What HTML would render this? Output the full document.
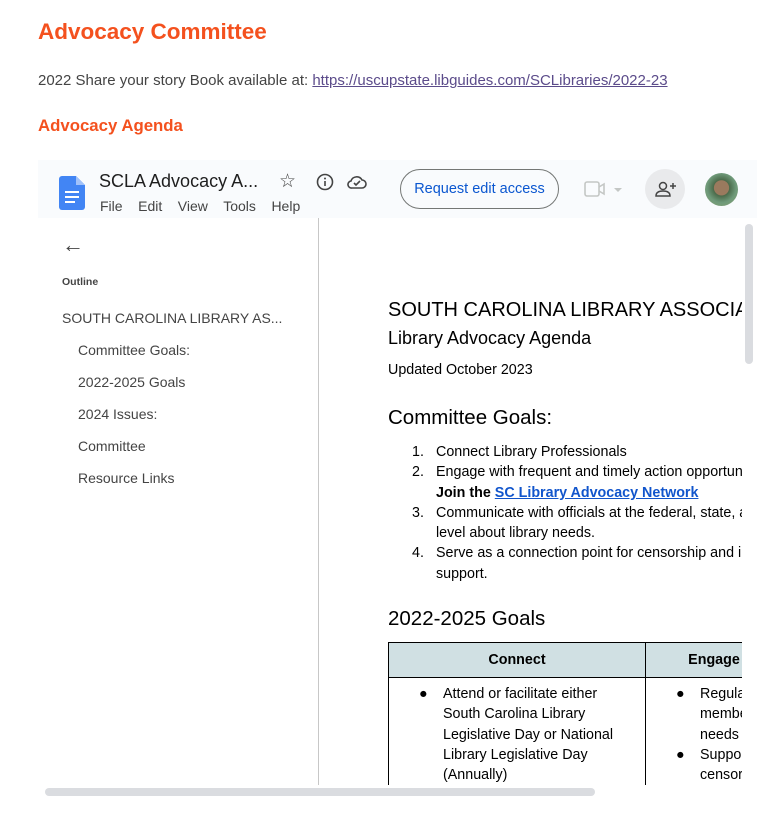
<!DOCTYPE html>
<html><head><style>
body{margin:0;width:777px;height:823px;background:#fff;font-family:"Liberation Sans",sans-serif;position:relative;overflow:hidden}
.a{position:absolute;white-space:nowrap}
h1{position:absolute;left:38px;top:19px;margin:0;font-size:22.5px;color:#f4511e;font-weight:bold}
.st{left:38px;top:72px;font-size:15px;color:#444}
.st a{color:#5b4b8a}
h2{position:absolute;left:38px;top:116px;margin:0;font-size:16.8px;color:#f4511e;font-weight:bold}
.frame{position:absolute;left:38px;top:160px;width:719px;height:625px;overflow:hidden;background:#fff}
.tb{position:absolute;left:0;top:0;width:719px;height:58px;background:#f9fbfd}
.side{position:absolute;left:0;top:58px;width:280px;height:567px;background:#fff;border-right:1px solid #c7c7c7}
.s{font-size:14px;color:#444}
.doc{position:absolute;left:281px;top:58px;width:423px;height:567px;overflow:hidden}
.d{font-family:"Liberation Sans",Arial,sans-serif;color:#000}
table{position:absolute;left:69px;top:424px;border-collapse:collapse;font-size:14.3px;table-layout:fixed;width:390px}
td,th{border:1px solid #000;vertical-align:top;overflow:hidden}
th{background:#d0e0e3;height:32px;font-weight:bold;vertical-align:middle}
</style></head><body>
<h1>Advocacy Committee</h1>
<div class="a st">2022 Share your story Book available at: <a href="#">https://uscupstate.libguides.com/SCLibraries/2022-23</a></div>
<h2>Advocacy Agenda</h2>
<div class="frame">
 <div class="tb">
  <svg class="a" style="left:21px;top:16px" width="26" height="34" viewBox="0 0 26 34"><path d="M0 3a3 3 0 0 1 3-3h14l9 9v22a3 3 0 0 1-3 3H3a3 3 0 0 1-3-3z" fill="#4285f4"/><path d="M17 0v9h9z" fill="#a1c2fa"/><rect x="6" y="15" width="14" height="2" fill="#fff"/><rect x="6" y="20" width="14" height="2" fill="#fff"/><rect x="6" y="25" width="10" height="2" fill="#fff"/></svg>
  <div class="a" style="left:61px;top:11px;font-size:18px;color:#1f1f1f">SCLA Advocacy A...</div>
  <div class="a" style="left:62px;top:38px;font-size:14px;color:#444">File&nbsp;&nbsp;&nbsp; Edit&nbsp;&nbsp;&nbsp; View&nbsp;&nbsp;&nbsp; Tools&nbsp;&nbsp;&nbsp; Help</div>
  <div class="a" style="left:241px;top:10px;font-size:19px;color:#444">☆</div>
  <svg class="a" style="left:278px;top:13px" width="18" height="18"><circle cx="9" cy="9" r="7.5" fill="none" stroke="#444" stroke-width="1.6"/><rect x="8.2" y="8" width="1.6" height="5" fill="#444"/><circle cx="9" cy="5.5" r="1" fill="#444"/></svg>
  <svg class="a" style="left:309px;top:14px" width="20" height="16"><path d="M5 14h10a4 4 0 0 0 0-8 6 6 0 0 0-11 1 3.5 3.5 0 0 0 1 7z" fill="none" stroke="#444" stroke-width="1.6"/><path d="M7 9l2 2 4-4" fill="none" stroke="#444" stroke-width="1.6"/></svg>
  <div class="a" style="left:362px;top:9px;width:159px;height:40px;border:1px solid #747775;border-radius:20px;box-sizing:border-box;text-align:center;line-height:38px;font-size:14.5px;color:#0b57d0">Request edit access</div>
  <svg class="a" style="left:546px;top:20px" width="40" height="18"><rect x="1" y="2" width="14" height="14" rx="2" fill="none" stroke="#c4c7c5" stroke-width="1.6"/><path d="M15 7l5-3v10l-5-3" fill="none" stroke="#c4c7c5" stroke-width="1.6"/><path d="M30 8h8l-4 4z" fill="#c4c7c5"/></svg>
  <div class="a" style="left:607px;top:9px;width:40px;height:40px;border-radius:50%;background:#e9eaec"></div>
  <svg class="a" style="left:617px;top:20px" width="22" height="18"><circle cx="8" cy="6" r="3.5" fill="none" stroke="#444" stroke-width="1.5"/><path d="M1 16c0-4 3-5 7-5s7 1 7 5z" fill="none" stroke="#444" stroke-width="1.5"/><path d="M18 3v6M15 6h6" stroke="#444" stroke-width="1.5"/></svg>
  <div class="a" style="left:667px;top:13px;width:33px;height:33px;border-radius:50%;background:radial-gradient(circle at 50% 45%,#9a7a5e 0 30%,#4a6a4a 32%,#6f9a7a 60%,#8aa070)"></div>
 </div>
 <div class="side">
  <div class="a" style="left:24px;top:14px;font-size:22px;color:#444">←</div>
  <div class="a" style="left:24px;top:58px;font-size:10.5px;color:#444;font-weight:bold">Outline</div>
  <div class="a s" style="left:24px;top:92px">SOUTH CAROLINA LIBRARY AS...</div>
  <div class="a s" style="left:40px;top:124px">Committee Goals:</div>
  <div class="a s" style="left:40px;top:156px">2022-2025 Goals</div>
  <div class="a s" style="left:40px;top:188px">2024 Issues:</div>
  <div class="a s" style="left:40px;top:220px">Committee</div>
  <div class="a s" style="left:40px;top:252px">Resource Links</div>
 </div>
 <div class="doc">
 <div class="a d" style="left:69px;top:81px;font-size:20px">SOUTH CAROLINA LIBRARY ASSOCIATION</div>
 <div class="a d" style="left:69px;top:110px;font-size:18px">Library Advocacy Agenda</div>
 <div class="a d" style="left:69px;top:144px;font-size:14.3px">Updated October 2023</div>
 <div class="a d" style="left:69px;top:188px;font-size:20.5px">Committee Goals:</div>
 <div class="a d" style="left:69px;top:224px;font-size:14.3px;line-height:20.3px">
  <div><span style="display:inline-block;width:48px;padding-left:24px;box-sizing:border-box">1.</span>Connect Library Professionals</div>
  <div><span style="display:inline-block;width:48px;padding-left:24px;box-sizing:border-box">2.</span>Engage with frequent and timely action opportunities</div>
  <div style="padding-left:48px;font-weight:bold">Join the <a href="#" style="color:#1155cc">SC Library Advocacy Network</a></div>
  <div><span style="display:inline-block;width:48px;padding-left:24px;box-sizing:border-box">3.</span>Communicate with officials at the federal, state, and local</div>
  <div style="padding-left:48px">level about library needs.</div>
  <div><span style="display:inline-block;width:48px;padding-left:24px;box-sizing:border-box">4.</span>Serve as a connection point for censorship and intellectual</div>
  <div style="padding-left:48px">support.</div>
 </div>
 <div class="a d" style="left:69px;top:389px;font-size:20.5px">2022-2025 Goals</div>
 <table>
  <tr><th style="width:254px">Connect</th><th style="width:134px">Engage</th></tr>
  <tr><td style="padding:6px 0 0 0;line-height:20.3px;height:140px"><div style="position:relative;padding-left:54px">
   <span style="position:absolute;left:30px">●</span>Attend or facilitate either<br>South Carolina Library<br>Legislative Day or National<br>Library Legislative Day<br>(Annually)</div></td>
   <td style="padding:6px 0 0 0;line-height:20.3px;white-space:nowrap"><div style="position:relative;padding-left:54px">
   <span style="position:absolute;left:30px">●</span>Regularly communicate<br>members about library<br>needs<br><span style="position:absolute;left:30px">●</span>Support efforts against<br>censorship</div></td></tr>
 </table>
 </div>
 <div class="a" style="left:707px;top:64px;width:8px;height:140px;border-radius:4px;background:#dadce0"></div>
</div>
<div class="a" style="left:45px;top:788px;width:550px;height:8px;border-radius:4px;background:#dadce0"></div>
</body></html>
